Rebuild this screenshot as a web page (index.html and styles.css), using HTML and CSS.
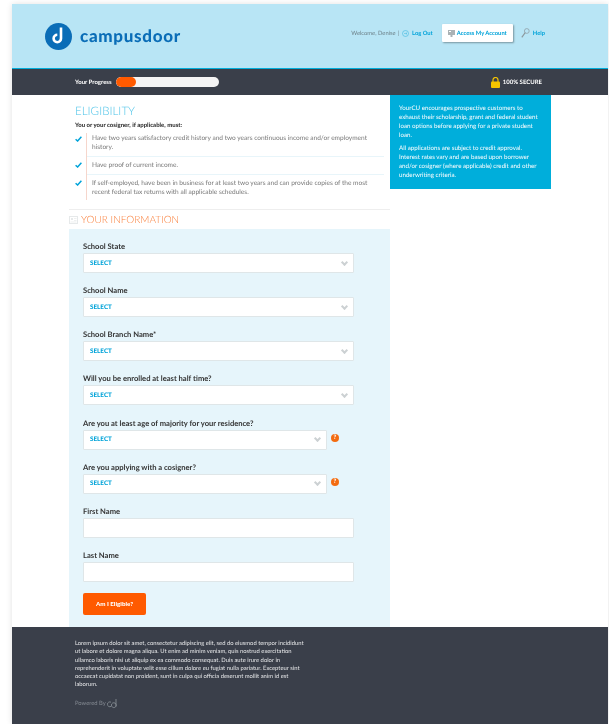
FILE: index.html
```html
<!DOCTYPE html>
<html lang="en">
<head>
    <meta charset="UTF-8">
    <meta name="viewport" content="width=device-width, initial-scale=1.0">
    <title>Campusdoor - Eligibility</title>
    <link rel="stylesheet" href="styles.css">
</head>
<body>
    <div class="page">
        <header class="site-header">
            <div class="logo">
                <svg class="logo-mark" width="27" height="27" viewBox="0 0 27 27">
                    <circle cx="13.5" cy="13.5" r="13.5" fill="#0a6db7"/>
                    <path d="M16 4.5v11a3.7 3.7 0 1 1-3.7-3.7" fill="none" stroke="#fff" stroke-width="2.6"/>
                </svg>
                <span class="logo-text">campusdoor</span>
            </div>
            <nav class="top-nav">
                <span class="welcome">Welcome, Denise</span>
                <span class="sep">|</span>
                <svg class="nav-icon" width="7" height="7" viewBox="0 0 7 7">
                    <circle cx="3.5" cy="3.5" r="3" fill="none" stroke="#4dbde3" stroke-width="0.7"/>
                    <path d="M2 3.5h3M3.8 2.4l1.2 1.1-1.2 1.1" fill="none" stroke="#4dbde3" stroke-width="0.6"/>
                </svg>
                <a class="nav-link" href="#">Log Out</a>
                <a class="account-btn" href="#">
                    <svg width="7" height="7" viewBox="0 0 7 7">
                        <rect x="0" y="0" width="7" height="5" fill="#aab2b5"/>
                        <rect x="2.5" y="5" width="2" height="2" fill="#aab2b5"/>
                        <rect x="1" y="1" width="2" height="1" fill="#fff"/>
                    </svg>
                    <span>Access My Account</span>
                </a>
                <svg class="help-icon" width="9" height="10" viewBox="0 0 9 10">
                    <circle cx="5.8" cy="3" r="2.4" fill="none" stroke="#8b979c" stroke-width="0.7"/>
                    <path d="M4.2 4.6L0.8 9.4" stroke="#8b979c" stroke-width="1.1"/>
                </svg>
                <a class="nav-link" href="#">Help</a>
            </nav>
        </header>

        <div class="status-bar">
            <div class="progress-wrap">
                <span class="progress-label">Your Progress</span>
                <div class="progress-track"><div class="progress-fill" style="width: 20%"></div></div>
            </div>
            <div class="secure">
                <svg width="9" height="11" viewBox="0 0 9 11">
                    <path d="M2 5V3a2.5 2.5 0 0 1 5 0v2" fill="none" stroke="#f6c500" stroke-width="1.2"/>
                    <rect x="0" y="4.6" width="9" height="6.4" rx="1" fill="#f6c500"/>
                </svg>
                <span>100% SECURE</span>
            </div>
        </div>

        <div class="main">
            <div class="content">
                <section class="eligibility">
                    <h2 class="eligibility-title">ELIGIBILITY</h2>
                    <p class="eligibility-intro">You or your cosigner, if applicable, must:</p>
                    <ul class="check-list">
                        <li class="check-item">
                            <span class="check"><svg width="7" height="6" viewBox="0 0 7 6"><path d="M0.6 3.2L2.6 5L6.4 0.8" fill="none" stroke="#00a3d9" stroke-width="1.5"/></svg></span>
                            <p>Have two years satisfactory credit history and two years continuous income and/or employment history.</p>
                        </li>
                        <li class="check-item">
                            <span class="check"><svg width="7" height="6" viewBox="0 0 7 6"><path d="M0.6 3.2L2.6 5L6.4 0.8" fill="none" stroke="#00a3d9" stroke-width="1.5"/></svg></span>
                            <p>Have proof of current income.</p>
                        </li>
                        <li class="check-item">
                            <span class="check"><svg width="7" height="6" viewBox="0 0 7 6"><path d="M0.6 3.2L2.6 5L6.4 0.8" fill="none" stroke="#00a3d9" stroke-width="1.5"/></svg></span>
                            <p>If self-employed, have been in business for at least two years and can provide copies of the most recent federal tax returns with all applicable schedules.</p>
                        </li>
                    </ul>
                </section>

                <div class="info-heading">
                    <svg width="9" height="8" viewBox="0 0 9 8">
                        <rect x="0.5" y="0.5" width="8" height="7" fill="none" stroke="#e6e9ea"/>
                        <rect x="2" y="2" width="2" height="2" fill="#e6e9ea"/>
                        <path d="M5 2.5h2.5M5 4.5h2.5M1.5 6h6" stroke="#e6e9ea" stroke-width="0.7"/>
                    </svg>
                    <h2>YOUR INFORMATION</h2>
                </div>

                <form class="info-form">
                    <div class="field">
                        <label>School State</label>
                        <div class="select"><span>SELECT</span><i class="chevron"></i></div>
                    </div>
                    <div class="field">
                        <label>School Name</label>
                        <div class="select"><span>SELECT</span><i class="chevron"></i></div>
                    </div>
                    <div class="field">
                        <label>School Branch Name*</label>
                        <div class="select"><span>SELECT</span><i class="chevron"></i></div>
                    </div>
                    <div class="field">
                        <label>Will you be enrolled at least half time?</label>
                        <div class="select"><span>SELECT</span><i class="chevron"></i></div>
                    </div>
                    <div class="field">
                        <label>Are you at least age of majority for your residence?</label>
                        <div class="select-row">
                            <div class="select short"><span>SELECT</span><i class="chevron"></i></div>
                            <span class="hint">?</span>
                        </div>
                    </div>
                    <div class="field">
                        <label>Are you applying with a cosigner?</label>
                        <div class="select-row">
                            <div class="select short"><span>SELECT</span><i class="chevron"></i></div>
                            <span class="hint">?</span>
                        </div>
                    </div>
                    <div class="field">
                        <label>First Name</label>
                        <div class="text-input"></div>
                    </div>
                    <div class="field">
                        <label>Last Name</label>
                        <div class="text-input"></div>
                    </div>
                    <button class="submit" type="button">Am I Eligible?</button>
                </form>
            </div>

            <aside class="sidebar">
                <p>YourCU encourages prospective customers to exhaust their scholarship, grant and federal student loan options before applying for a private student loan.</p>
                <p>All applications are subject to credit approval. Interest rates vary and are based upon borrower and/or cosigner (where applicable) credit and other underwriting criteria.</p>
            </aside>
        </div>

        <footer class="site-footer">
            <p>Lorem ipsum dolor sit amet, consectetur adipiscing elit, sed do eiusmod tempor incididunt ut labore et dolore magna aliqua. Ut enim ad minim veniam, quis nostrud exercitation ullamco laboris nisi ut aliquip ex ea commodo consequat. Duis aute irure dolor in reprehenderit in voluptate velit esse cillum dolore eu fugiat nulla pariatur. Excepteur sint occaecat cupidatat non proident, sunt in culpa qui officia deserunt mollit anim id est laborum.</p>
            <div class="powered">
                <span>Powered By</span>
                <svg width="10" height="11" viewBox="0 0 10 11">
                    <path d="M4 4.2a2.4 2.4 0 1 0 0 4.2M9 1v7.5M9 6.2a2.4 2.4 0 1 1-0.1-0.2" fill="none" stroke="#8d949b" stroke-width="0.8"/>
                </svg>
            </div>
        </footer>
    </div>
</body>
</html>
```

FILE: styles.css
```css
* {
    box-sizing: border-box;
}
html, body {
    margin: 0;
    padding: 0;
    background: #fff;
}
body {
    font-family: Lato, "Open Sans", Arial, sans-serif;
    text-rendering: geometricPrecision;
    overflow: hidden;
}
p, h2, ul {
    margin: 0;
    padding: 0;
}
a {
    text-decoration: none;
}
.page {
    margin: 4px 1px 0 12px;
    background: #fff;
    box-shadow: 0 0 6px rgba(0,0,0,0.12);
    filter: blur(0.3px);
}

/* header */
.site-header {
    height: 65px;
    background: #b8e5f5;
    border-bottom: 1px solid #00aedb;
    display: flex;
    justify-content: space-between;
    padding: 19px 63px 0 33px;
}
.logo {
    display: flex;
    align-items: flex-start;
    gap: 8px;
}
.logo-text {
    font-size: 17px;
    line-height: 26px;
    font-weight: 900;
    letter-spacing: 0.7px;
    color: #0a6db7;
}
.top-nav {
    display: flex;
    align-items: center;
    height: 20px;
    font-size: 5.8px;
}
.welcome {
    color: #6d8189;
}
.sep {
    color: #6d8189;
    margin: 0 2.5px;
}
.nav-icon {
    margin-right: 3px;
}
.nav-link {
    color: #00a3d9;
    font-weight: 700;
}
.account-btn {
    display: flex;
    align-items: center;
    gap: 2px;
    width: 71px;
    height: 18px;
    margin: 0 8px 0 9px;
    padding-left: 6px;
    background: #fff;
    color: #00a3d9;
    font-weight: 700;
    border-radius: 1px;
    box-shadow: 1px 1px 2px rgba(0,0,0,0.35);
}
.help-icon {
    margin-right: 3px;
}

/* progress bar */
.status-bar {
    height: 26px;
    background: #3a3f4a;
    display: flex;
    justify-content: space-between;
    align-items: center;
    padding: 0 66px 0 63px;
    color: #fff;
    font-size: 6px;
    font-weight: 700;
}
.progress-wrap {
    display: flex;
    align-items: center;
    gap: 4px;
}
.progress-track {
    width: 103px;
    height: 10px;
    background: #f4f4f4;
    border-radius: 5px;
    overflow: hidden;
}
.progress-fill {
    height: 100%;
    background: #ff5a00;
    border-radius: 5px;
}
.secure {
    display: flex;
    align-items: center;
    gap: 3px;
}

/* main columns */
.main {
    display: flex;
    align-items: flex-start;
    padding-left: 57px;
}
.content {
    width: 321px;
}
.eligibility {
    padding: 9px 6px 0;
}
.eligibility-title {
    font-size: 11.6px;
    line-height: 15px;
    font-weight: 300;
    color: #4cc3e8;
}
.eligibility-intro {
    margin-top: 3px;
    font-size: 6px;
    line-height: 8px;
    font-weight: 900;
    color: #333;
}
.check-list {
    list-style: none;
    margin-top: 3px;
}
.check-item {
    display: flex;
    color: #777;
    font-size: 6.55px;
    line-height: 9px;
}
.check-item p {
    flex: 1;
    padding: 4px 0 4px 5px;
}
.check-item:first-child p {
    padding-top: 1px;
}
.check-item:last-child p {
    padding-bottom: 3px;
}
.check-item + .check-item p {
    border-top: 1px solid #e8f5fa;
}
.check {
    width: 12px;
    flex: none;
    border-right: 1px solid #f6d6cc;
    padding-top: 6px;
    line-height: 0;
}
.check-item:first-child .check {
    padding-top: 3px;
}
.info-heading {
    display: flex;
    align-items: center;
    gap: 3px;
    height: 20px;
    margin-top: 9px;
    border-top: 1px solid #eee;
}
.info-heading h2 {
    font-size: 10px;
    font-weight: 300;
    color: #f97c36;
}

/* form */
.info-form {
    height: 398px;
    background: #e6f5fb;
    padding: 13px 36px 0 14px;
}
.field {
    margin-bottom: 13.15px;
}
.field:nth-last-child(2) {
    margin-bottom: 11px;
}
.field label {
    display: block;
    font-size: 7.6px;
    line-height: 8px;
    margin-bottom: 3px;
    font-weight: 700;
    color: #333;
}
.select, .text-input {
    height: 20px;
    background: #fff;
    border: 1px solid #dfe6e8;
    border-radius: 1px;
}
.select {
    display: flex;
    justify-content: space-between;
    align-items: center;
    padding: 0 5px 0 6px;
    font-size: 6.3px;
    font-weight: 900;
    color: #00a3d9;
}
.select.short {
    width: 244px;
}
.chevron {
    width: 5px;
    height: 5px;
    margin: -2px 1px 0 0;
    border-right: 2px solid #ccd1d3;
    border-bottom: 2px solid #ccd1d3;
    transform: rotate(45deg);
}
.select-row {
    display: flex;
    gap: 4px;
}
.hint {
    width: 8px;
    height: 8px;
    margin-top: 4px;
    background: #f36b10;
    border-radius: 50%;
    color: #fff;
    font-size: 6px;
    line-height: 8px;
    font-weight: 900;
    text-align: center;
}
.submit {
    display: block;
    width: 63px;
    height: 22px;
    padding: 0;
    background: #ff5a00;
    border: 0;
    border-radius: 2px;
    color: #fff;
    font-family: inherit;
    font-size: 6.2px;
    font-weight: 900;
}

/* sidebar */
.sidebar {
    width: 161px;
    height: 94px;
    padding: 9px 8px 0 9px;
    background: #00aedb;
    color: #fff;
    font-size: 6.2px;
    line-height: 9px;
}
.sidebar p + p {
    margin-top: 4px;
}

/* footer */
.site-footer {
    height: 97px;
    background: #3a3f4a;
    padding: 13px 0 0 63px;
    color: #e6e7e9;
    font-size: 5.85px;
    line-height: 8.3px;
}
.site-footer p {
    width: 229px;
}
.powered {
    display: flex;
    align-items: flex-end;
    gap: 1px;
    margin-top: 8px;
    color: #858b93;
}
```
